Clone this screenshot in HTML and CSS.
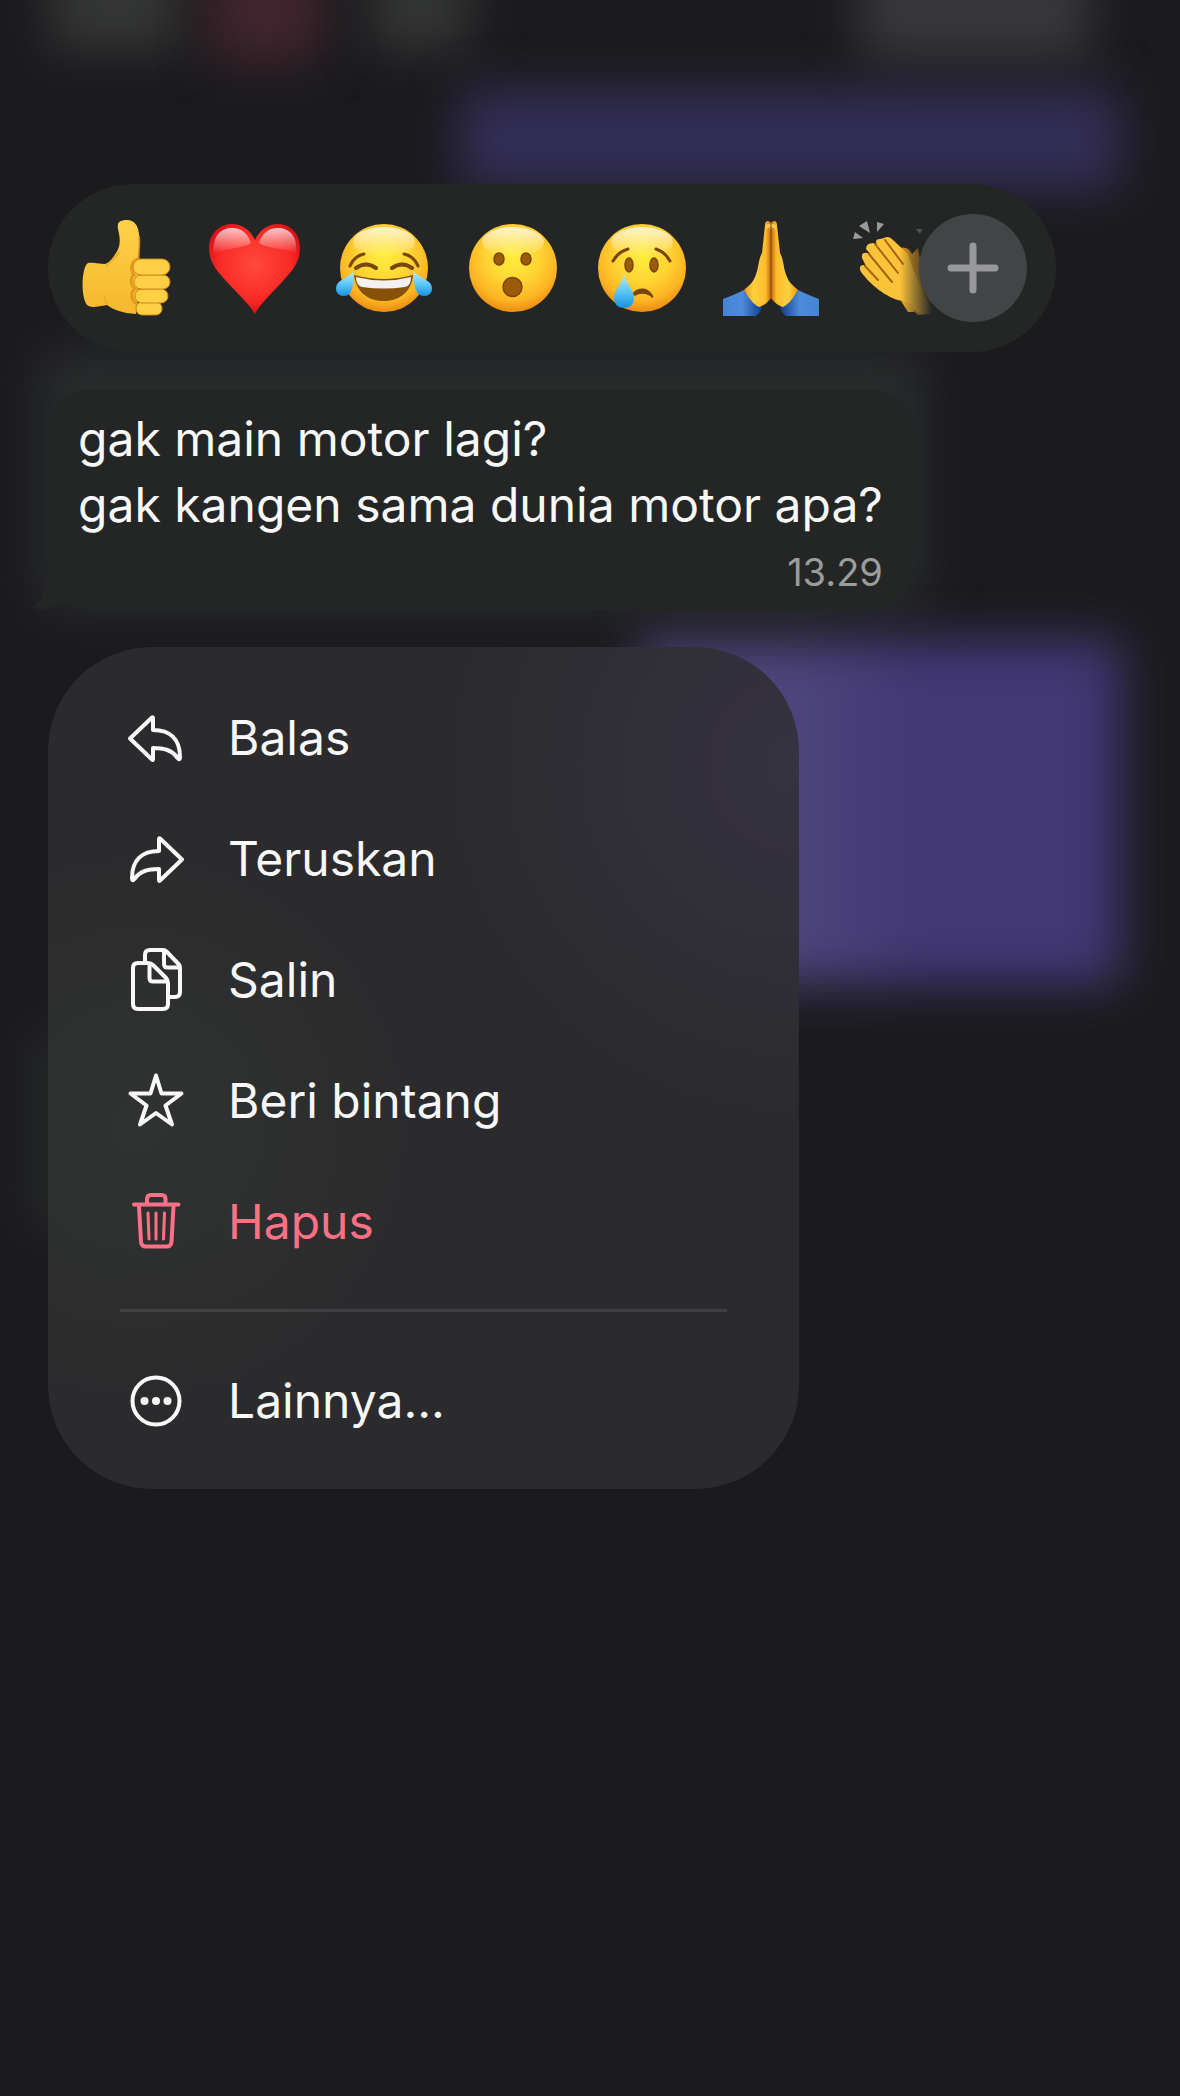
FILE: index.html
```html
<!DOCTYPE html>
<html lang="id">
<head>
<meta charset="utf-8">
<meta name="viewport" content="width=device-width, initial-scale=1">
<title>Obrolan</title>
<link rel="stylesheet" href="styles.css">
</head>
<body>
<svg class="defs" aria-hidden="true">
  <defs>
    <radialGradient id="face" cx="50%" cy="36%" r="66%">
      <stop offset="0" stop-color="#ffee3c"/><stop offset=".45" stop-color="#ffd533"/><stop offset=".78" stop-color="#fdb423"/><stop offset="1" stop-color="#e8850f"/>
    </radialGradient>
    <linearGradient id="shine" x1="0" y1="0" x2="0" y2="1">
      <stop offset="0" stop-color="#fff" stop-opacity=".75"/><stop offset="1" stop-color="#fff" stop-opacity="0"/>
    </linearGradient>
    <linearGradient id="drop" x1="0" y1="0" x2="0" y2="1">
      <stop offset="0" stop-color="#b5ecff"/><stop offset=".5" stop-color="#5cc8f8"/><stop offset="1" stop-color="#1593e6"/>
    </linearGradient>
    <linearGradient id="skin" x1="0" y1="0" x2="0" y2="1">
      <stop offset="0" stop-color="#ffd24a"/><stop offset="1" stop-color="#f6b72c"/>
    </linearGradient>
    <linearGradient id="palm" x1="0" y1="0" x2="1" y2="0">
      <stop offset="0" stop-color="#e79a1c"/><stop offset=".35" stop-color="#ffcf3f"/><stop offset=".8" stop-color="#fdbb2c"/><stop offset="1" stop-color="#c06a10"/>
    </linearGradient>
    <linearGradient id="cuff" x1="0" y1="0" x2="1" y2="0">
      <stop offset="0" stop-color="#4585d6"/><stop offset=".5" stop-color="#4d8ada"/><stop offset="1" stop-color="#0f3d8a"/>
    </linearGradient>
    <radialGradient id="heart" cx="50%" cy="45%" r="60%">
      <stop offset="0" stop-color="#ff4a3d"/><stop offset=".65" stop-color="#fa2a26"/><stop offset="1" stop-color="#cf0d14"/>
    </radialGradient>
  </defs>
</svg>

<div class="backdrop" aria-hidden="true">
  <span class="glow glow-grey-left"></span>
  <span class="glow glow-red"></span>
  <span class="glow glow-grey-mid"></span>
  <span class="glow glow-grey-right"></span>
  <span class="glow glow-purple-top"></span>
  <span class="glow glow-bubble"></span>
  <span class="glow glow-purple"></span>
  <span class="glow glow-left"></span>
</div>

<main class="screen">
  <section class="reactions" aria-label="Reaksi">
    <ul class="reaction-list">
      <li><button class="reaction" type="button" aria-label="Suka">
        <svg viewBox="0 0 112 112">
          <path fill="url(#skin)" d="M18 51C12 54 10 84 17 93C20 96 27 95 37 93C44 98 52 101 66 102L72 47H68C69 38 70 30 69 22C68 13 64 8 57 8C49 8 47 11 48 17C51 29 50 35 46 41C42 47 40 50 35 52C30 52 24 50 18 51Z"/>
          <path fill="none" stroke="#e09a1d" stroke-width="3" stroke-linecap="round" d="M67 92C60 88 61 79 65 77C60 73 60 65 64 63C60 58 61 50 67 47"/>
          <g fill="#ffd045" stroke="#cf8716" stroke-width="1">
            <rect x="66" y="90" width="26" height="13" rx="6"/>
            <rect x="65" y="77" width="33" height="14" rx="7"/>
            <rect x="64" y="63" width="36" height="14" rx="7"/>
            <rect x="63" y="47" width="37" height="16" rx="8"/>
          </g>
          <path fill="none" stroke="#e7a426" stroke-width="2" opacity=".7" d="M36 54C41 50 45 47 49 40M37 92C35 89 35 86 34 84M69 24C70 34 68 41 69 47"/>
        </svg></button></li>
      <li><button class="reaction" type="button" aria-label="Cinta">
        <svg viewBox="0 0 112 112">
          <path fill="url(#heart)" d="M56 102C50 92 40 83 28 70C17 58 10 50 10 36C10 22 20 12 33 12C44 12 52 19 56 28C60 19 68 12 79 12C92 12 101 22 101 36C101 50 94 58 83 70C71 83 61 92 56 102Z"/>
          <path fill="url(#shine)" d="M15 42C13 26 20 16 33 16C43 16 49 22 52 31C43 37 25 36 15 42ZM97 42C99 26 92 16 79 16C69 16 63 22 60 31C69 37 87 36 97 42Z"/>
        </svg></button></li>
      <li><button class="reaction" type="button" aria-label="Tertawa">
        <svg viewBox="0 0 112 112">
          <circle cx="56" cy="56" r="44" fill="url(#face)"/>
          <ellipse cx="56" cy="30" rx="31" ry="15" fill="url(#shine)"/>
          <g fill="none" stroke="#7a4508" stroke-linecap="round">
            <path stroke-width="3" d="M22 54Q26 44 36 42M90 54Q86 44 76 42"/>
            <path stroke-width="4" d="M28 56Q38 49 48 56M64 56Q74 49 84 56"/>
          </g>
          <path fill="#875108" d="M26 63Q56 71 85 63C84 79 72 89 56 89C39 89 28 79 26 63Z"/>
          <path fill="#f4f1f2" d="M28 65Q56 72 83 65Q83 74 77 75Q56 78 34 75Q28 73 28 65Z"/>
          <path fill="url(#drop)" d="M25 60C26 70 25 84 16 84C8 84 6 76 10 71C14 67 20 65 25 60ZM86 60C85 70 87 84 96 84C104 84 106 76 102 71C98 67 91 65 86 60Z"/>
        </svg></button></li>
      <li><button class="reaction" type="button" aria-label="Kaget">
        <svg viewBox="0 0 112 112">
          <circle cx="56" cy="56" r="44" fill="url(#face)"/>
          <ellipse cx="56" cy="30" rx="31" ry="15" fill="url(#shine)"/>
          <g fill="#9a5c0a" stroke="#7a4508" stroke-width="1.5">
            <ellipse cx="42" cy="47" rx="5" ry="6"/><ellipse cx="69" cy="47" rx="5" ry="6"/><circle cx="55.5" cy="75" r="9.5"/>
          </g>
        </svg></button></li>
      <li><button class="reaction" type="button" aria-label="Sedih">
        <svg viewBox="0 0 112 112">
          <circle cx="56" cy="56" r="44" fill="url(#face)"/>
          <ellipse cx="56" cy="30" rx="31" ry="15" fill="url(#shine)"/>
          <path fill="none" stroke="#7a4508" stroke-width="3" stroke-linecap="round" d="M27 49Q32 40 42 37M70 37Q79 40 84 49"/>
          <g fill="#9a5c0a" stroke="#7a4508" stroke-width="1.5">
            <ellipse cx="43" cy="53" rx="4" ry="7"/><ellipse cx="68" cy="53" rx="4" ry="7"/>
          </g>
          <path fill="#7a4508" d="M46 82C52 74 63 75 67 84C68 87 66 86 64 84C59 81 53 81 49 84Z"/>
          <path fill="url(#drop)" d="M38 62C40 72 48 78 48 86C48 92 44 96 38 96C32 96 28 92 28 86C28 78 36 72 38 62Z"/>
        </svg></button></li>
      <li><button class="reaction" type="button" aria-label="Terima kasih">
        <svg viewBox="0 0 112 112">
          <g id="half">
            <path fill="url(#cuff)" d="M8 87C16 84 23 81 29 78C34 86 40 93 47 95Q46 100 41 104H8Z"/>
            <path fill="url(#palm)" d="M56 11C54 8 50 8 50 13L47 41C43 48 44 56 40 65C38 71 33 74 29 78C33 85 38 92 44 95C50 93 53 90 56 86Z"/>
            <path fill="#ffe07a" opacity=".7" d="M51 14Q54 9 56 14V18Q53 13 51 18Z"/>
          </g>
          <use href="#half" transform="matrix(-1 0 0 1 112 0)"/>
          <path stroke="#a24f0b" stroke-width="1.5" d="M56 14V86"/>
        </svg></button></li>
      <li><button class="reaction" type="button" aria-label="Tepuk tangan">
        <svg viewBox="0 0 112 112">
          <path fill="#9a9a9c" d="M15 14L23 9L26 21ZM33 10L40 12L33 20ZM11 20L19 26L9 27ZM72 17L79 17L76 22Z"/>
          <path fill="#d9951d" d="M56 36Q64 34 68 42L74 36Q78 60 84 80L90 102L74 103L57 88Z"/>
          <path fill="#fcc23a" d="M40 26Q45 23 49 28L64 42C68 58 76 70 80 84Q86 94 88 102H76L58 89C42 86 26 72 17 60Q14 54 19 53L22 54L18 46Q17 40 23 41L27 43L22 37Q22 31 29 31L33 33Q30 27 36 27Z"/>
          <path fill="none" stroke="#a76509" stroke-width="2" stroke-linecap="round" d="M41 28L59 52M31 32L54 61M25 42L48 70M21 54L34 68"/>
          <path fill="#f1b432" d="M57 89L64 100L70 100L68 92Z"/>
        </svg></button></li>
    </ul>
    <button class="add-reaction" type="button" aria-label="Reaksi lainnya">
      <svg viewBox="0 0 108 108"><path stroke="#98989c" stroke-width="7" stroke-linecap="round" d="M54 32V76M32 54H76"/></svg>
    </button>
  </section>

  <article class="bubble">
    <svg class="tail" viewBox="0 0 40 48" aria-hidden="true"><path fill="#242625" d="M16 0C16 26 12 38 0 46C12 49 22 46 28 40L40 20V0Z"/></svg>
    <p class="message">gak main motor lagi?<br>gak kangen sama dunia motor apa?</p>
    <time class="time" datetime="13:29">13.29</time>
  </article>

  <nav class="menu" aria-label="Menu pesan">
    <button class="item" type="button">
      <svg class="icon" viewBox="0 0 72 72"><path d="M10 36.5L32 15.5Q33 15 33 16V28C50 28 60 37 60 55Q60 59 57.5 56C52 48 44 46 33 46V57Q33 58.5 32 57.5Z"/></svg>
      <span>Balas</span>
    </button>
    <button class="item" type="button">
      <svg class="icon" viewBox="0 0 72 72"><path d="M62 36.5L40 15.5Q39 15 39 16V28C22 28 12 37 12 55Q12 59 14.5 56C20 48 28 46 39 46V57Q39 58.5 40 57.5Z"/></svg>
      <span>Teruskan</span>
    </button>
    <button class="item" type="button">
      <svg class="icon" viewBox="0 0 72 72"><path d="M25 18V11Q25 6 30 6H43Q45 6 46.5 7.5L58.5 20Q60 21.5 60 24V48Q60 53 55 53H50M44 7V20Q44 23.5 47.5 23.5H59M18 19H28Q31 19 33 21L46 34Q48 36 48 39V60Q48 65 43 65H18Q13 65 13 60V24Q13 19 18 19ZM29.5 20V34Q29.5 37.5 33 37.5H47"/></svg>
      <span>Salin</span>
    </button>
    <button class="item" type="button">
      <svg class="icon" viewBox="0 0 72 72"><path d="M36 10.5L41.5 28.5H61.5L45.5 40.5L52 59.5L36 48L20 59.5L26.5 40.5L10.5 28.5H30.5Z"/></svg>
      <span>Beri bintang</span>
    </button>
    <button class="item item-danger" type="button">
      <svg class="icon" viewBox="0 0 72 72"><path d="M14 18.5H58.5M27 18V13Q27 9 31 9H41.5Q45.5 9 45.5 13V18M19 20L21 56Q21.5 60.5 26 60.5H46.5Q51 60.5 51.5 56L53.5 20"/><path stroke-width="3" d="M28 27L29 53M36 27V53M44.5 27L43.5 53"/></svg>
      <span>Hapus</span>
    </button>
    <hr class="divider">
    <button class="item" type="button">
      <svg class="icon" viewBox="0 0 72 72"><circle cx="36" cy="36" r="23.5"/><g class="dots"><circle cx="24.5" cy="36" r="4"/><circle cx="36" cy="36" r="4"/><circle cx="47.5" cy="36" r="4"/></g></svg>
      <span>Lainnya...</span>
    </button>
  </nav>
</main>
</body>
</html>
```

FILE: styles.css
```css
* {
  box-sizing: border-box;
}

body {
  margin: 0;
  min-height: 100vh;
  position: relative;
  overflow-x: hidden;
  background: #1b1b1e;
  color: #f8f8f9;
  font-family: Inter, "Liberation Sans", sans-serif;
}

button {
  border: 0;
  padding: 0;
  background: none;
  color: inherit;
  font: inherit;
  cursor: pointer;
}

.defs {
  position: absolute;
  width: 0;
  height: 0;
}

/* Blurred conversation behind the menu */
.backdrop {
  position: absolute;
  inset: 0;
  overflow: hidden;
}

.glow {
  position: absolute;
  filter: blur(24px);
}

.glow-grey-left {
  left: 50px;
  top: -40px;
  width: 130px;
  height: 90px;
  background: #353636;
}

.glow-red {
  left: 210px;
  top: -40px;
  width: 110px;
  height: 100px;
  background: #43252e;
}

.glow-grey-mid {
  left: 370px;
  top: -40px;
  width: 100px;
  height: 90px;
  background: #343535;
}

.glow-grey-right {
  right: 90px;
  top: -40px;
  width: 230px;
  height: 100px;
  background: #38383b;
}

.glow-purple-top {
  left: 460px;
  right: 60px;
  top: 90px;
  height: 100px;
  background: #332e56;
}

.glow-bubble {
  left: 40px;
  top: 350px;
  width: 884px;
  height: 260px;
  background: #292b2c;
}

.glow-purple {
  left: 640px;
  right: 60px;
  top: 640px;
  height: 344px;
  background: linear-gradient(to right, #4e467d 30%, #413875 58%);
}

.glow-left {
  left: 30px;
  top: 1030px;
  width: 200px;
  height: 200px;
  background: #252727;
}

.screen {
  position: relative;
  display: flex;
  flex-direction: column;
  align-items: flex-start;
  padding: 184px 48px 48px;
}

.reactions {
  position: relative;
  width: 100%;
  max-width: 1008px;
  border-radius: 84px;
  background: #242625;
}

.reaction-list {
  display: flex;
  margin: 0;
  padding: 28px 0 28px 22px;
  list-style: none;
  overflow: hidden;
  border-radius: 84px;
  mask-image: linear-gradient(to right, #000 calc(100% - 156px), transparent calc(100% - 124px));
}

.reaction-list li {
  flex: none;
  width: 129px;
}

.reaction {
  display: block;
  width: 112px;
  height: 112px;
}

.reaction svg,
.add-reaction svg {
  display: block;
}

.add-reaction {
  position: absolute;
  top: 30px;
  right: 29px;
  width: 108px;
  height: 108px;
  border-radius: 50%;
  background: #414545;
}

.bubble {
  position: relative;
  display: flex;
  flex-direction: column;
  margin-top: 38px;
  padding: 16px 30px;
  border-radius: 40px;
  background: #242625;
}

.tail {
  position: absolute;
  left: -16px;
  bottom: 0;
  width: 40px;
  height: 48px;
}

.message {
  margin: 0;
  font-size: 48px;
  line-height: 66px;
}

.time {
  align-self: flex-end;
  margin-top: 12px;
  color: #9b9c9c;
  font-size: 38px;
  line-height: 44px;
}

.menu {
  display: flex;
  flex-direction: column;
  width: 100%;
  max-width: 751px;
  margin-top: 37px;
  padding: 30px 72px 28px;
  border-radius: 104px;
  background:
    radial-gradient(circle at 100% 14%, #363241, transparent 34%),
    radial-gradient(circle at 12% 57%, #303231, transparent 34%),
    #2b2b2d;
}

.item {
  display: flex;
  align-items: center;
  gap: 36px;
  height: 121px;
  font-size: 48px;
  line-height: 60px;
  text-align: left;
}

.item-danger {
  color: #fa7185;
}

.icon {
  flex: none;
  width: 72px;
  height: 72px;
  fill: none;
  stroke: currentColor;
  stroke-width: 4;
  stroke-linecap: round;
  stroke-linejoin: round;
}

.dots {
  fill: currentColor;
  stroke: none;
}

.divider {
  width: 100%;
  height: 3px;
  margin: 27px 0 28px;
  border: 0;
  background: #414143;
}
```
